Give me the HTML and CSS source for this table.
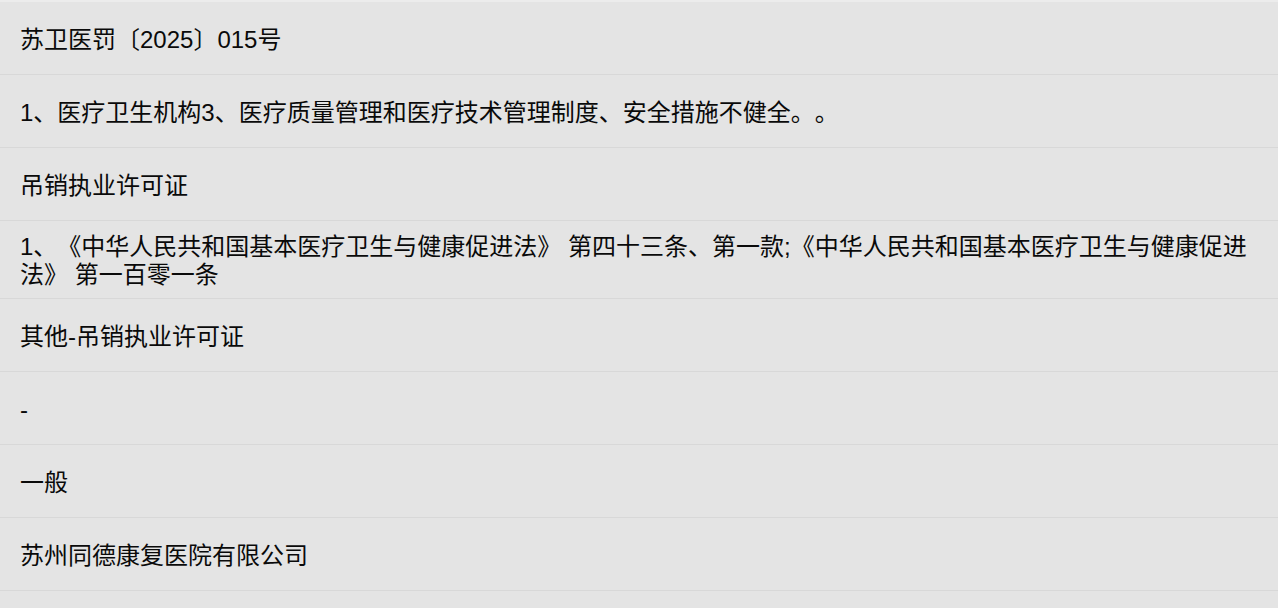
FILE: index.html
```html
<!DOCTYPE html>
<html lang="zh-CN">
<head>
    <meta charset="UTF-8">
    <meta name="viewport" content="width=device-width, initial-scale=1.0">
    <title>行政处罚详情</title>
    <link rel="stylesheet" href="styles.css">
</head>
<body>
    <!-- 处罚信息列表 -->
    <div class="detail-list">
        <div class="detail-row">苏卫医罚〔2025〕015号</div>
        <div class="detail-row">1、医疗卫生机构3、医疗质量管理和医疗技术管理制度、安全措施不健全。。</div>
        <div class="detail-row">吊销执业许可证</div>
        <div class="detail-row">1、《中华人民共和国基本医疗卫生与健康促进法》 第四十三条、第一款;《中华人民共和国基本医疗卫生与健康促进法》 第一百零一条</div>
        <div class="detail-row">其他-吊销执业许可证</div>
        <div class="detail-row">-</div>
        <div class="detail-row">一般</div>
        <div class="detail-row">苏州同德康复医院有限公司</div>
    </div>
</body>
</html>
```

FILE: styles.css
```css
/* 页面整体 */
body {
    margin: 0;
    padding: 0;
    background-color: #e4e4e4;
    font-family: "Liberation Sans", "Noto Sans CJK SC", sans-serif;
    color: #0a0a0a;
}

/* 列表容器 */
.detail-list {
    border-top: 2px solid #ececec;
}

/* 每一行 */
.detail-row {
    display: flex;
    align-items: center;
    box-sizing: border-box;
    min-height: 73px;
    padding: 12px 20px 9px;
    border-bottom: 1px solid #d8d8d8;
    font-size: 24px;
    line-height: 28px;
    text-spacing-trim: space-all;
}
```
